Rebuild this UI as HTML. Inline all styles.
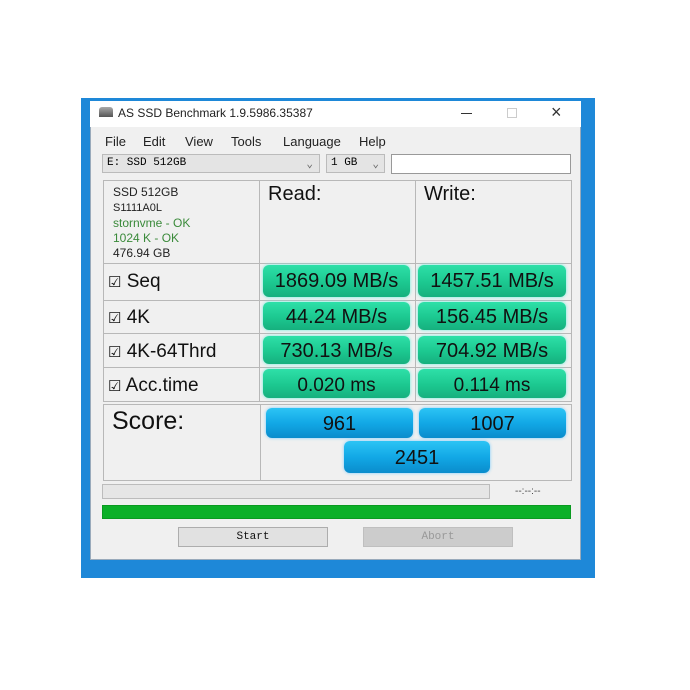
<!DOCTYPE html>
<html><head><style>
*{margin:0;padding:0;box-sizing:border-box}
body{width:690px;height:690px;background:#fff;position:relative;font-family:"Liberation Sans",sans-serif;overflow:hidden}
.a{position:absolute}
.bg{left:81px;top:98px;width:514px;height:480px;background:#1e88d8}
.win{left:90px;top:101px;width:491px;height:459px;background:#f0f0f0;border:1px solid #9ab}
.title{left:90px;top:101px;width:491px;height:26px;background:#fff}
.g{background:linear-gradient(#2ee0a8,#1cc890 55%,#16b07e);border-radius:6px;text-align:center;color:#111;font-size:20px;box-shadow:0 0 3px #6ed}
.b{background:linear-gradient(#2cc4f4,#12a8e6 50%,#0a8ccc);border-radius:6px;text-align:center;color:#111;font-size:20px;box-shadow:0 0 3px #7cf}
.cell{border:1px solid #b8b8b8}
.lbl{font-size:19px;color:#111}
.mono{font-family:"Liberation Mono",monospace;font-size:11px}
.m{position:absolute;top:134px;font-size:13px;color:#222}
</style></head><body>
<div class="a bg"></div>
<div class="a win"></div>
<div class="a title"></div>
<div class="a" style="left:99px;top:107px;width:14px;height:10px;background:linear-gradient(#aaa,#555);border-radius:3px 3px 0 0"></div>
<div class="a" style="left:118px;top:106px;font-size:12px;color:#222">AS SSD Benchmark 1.9.5986.35387</div>
<div class="a" style="left:461px;top:113px;width:11px;height:1px;background:#333"></div>
<div class="a" style="left:507px;top:108px;width:10px;height:10px;border:1px solid #ccc"></div>
<div class="a" style="left:551px;top:102px;font-size:18px;color:#333">×</div>
<div class="m" style="left:105px">File</div>
<div class="m" style="left:143px">Edit</div>
<div class="m" style="left:185px">View</div>
<div class="m" style="left:231px">Tools</div>
<div class="m" style="left:283px">Language</div>
<div class="m" style="left:359px">Help</div>
<div class="a mono" style="left:102px;top:154px;width:218px;height:19px;background:#e4e4e4;border:1px solid #bbb;padding:2px 4px">E: SSD 512GB<span style="position:absolute;right:6px;color:#666">⌄</span></div>
<div class="a mono" style="left:326px;top:154px;width:59px;height:19px;background:#e4e4e4;border:1px solid #bbb;padding:2px 4px">1 GB<span style="position:absolute;right:5px;color:#666">⌄</span></div>
<div class="a" style="left:391px;top:154px;width:180px;height:20px;background:#fff;border:1px solid #999"></div>
<div class="a cell" style="left:103px;top:180px;width:469px;height:222px"></div>
<div class="a" style="left:259px;top:180px;width:1px;height:222px;background:#b8b8b8"></div>
<div class="a" style="left:415px;top:180px;width:1px;height:222px;background:#b8b8b8"></div>
<div class="a" style="left:103px;top:263px;width:469px;height:1px;background:#b8b8b8"></div>
<div class="a" style="left:103px;top:300px;width:469px;height:1px;background:#b8b8b8"></div>
<div class="a" style="left:103px;top:333px;width:469px;height:1px;background:#b8b8b8"></div>
<div class="a" style="left:103px;top:367px;width:469px;height:1px;background:#b8b8b8"></div>
<div class="a" style="left:113px;top:185px;font-size:12px;line-height:15px;color:#222">SSD 512GB<br><span style="font-size:11px">S1111A0L</span><br><span style="color:#3a8a3a">stornvme - OK<br>1024 K - OK</span><br>476.94 GB</div>
<div class="a" style="left:268px;top:183px;font-size:20px;color:#111">Read:</div>
<div class="a" style="left:424px;top:183px;font-size:20px;color:#111">Write:</div>
<div class="a lbl" style="left:108px;top:271px"><span style="font-size:15px">☑</span> Seq</div>
<div class="a lbl" style="left:108px;top:307px"><span style="font-size:15px">☑</span> 4K</div>
<div class="a lbl" style="left:108px;top:341px"><span style="font-size:15px">☑</span> 4K-64Thrd</div>
<div class="a lbl" style="left:108px;top:375px"><span style="font-size:15px">☑</span> Acc.time</div>
<div class="a g" style="left:263px;top:265px;width:147px;height:32px;line-height:33px">1869.09 MB/s</div>
<div class="a g" style="left:418px;top:265px;width:148px;height:32px;line-height:33px">1457.51 MB/s</div>
<div class="a g" style="left:263px;top:302px;width:147px;height:28px;line-height:31px">44.24 MB/s</div>
<div class="a g" style="left:418px;top:302px;width:148px;height:28px;line-height:31px">156.45 MB/s</div>
<div class="a g" style="left:263px;top:336px;width:147px;height:28px;line-height:31px">730.13 MB/s</div>
<div class="a g" style="left:418px;top:336px;width:148px;height:28px;line-height:31px">704.92 MB/s</div>
<div class="a g" style="left:263px;top:369px;width:147px;height:29px;line-height:33px;font-size:19px">0.020 ms</div>
<div class="a g" style="left:418px;top:369px;width:148px;height:29px;line-height:33px;font-size:19px">0.114 ms</div>
<div class="a cell" style="left:103px;top:404px;width:469px;height:77px"></div>
<div class="a" style="left:260px;top:404px;width:1px;height:77px;background:#b8b8b8"></div>
<div class="a" style="left:112px;top:407px;font-size:25px;color:#111">Score:</div>
<div class="a b" style="left:266px;top:408px;width:147px;height:30px;line-height:33px">961</div>
<div class="a b" style="left:419px;top:408px;width:147px;height:30px;line-height:33px">1007</div>
<div class="a b" style="left:344px;top:441px;width:146px;height:32px;line-height:34px">2451</div>
<div class="a" style="left:102px;top:484px;width:388px;height:15px;background:#e6e6e6;border:1px solid #bcbcbc"></div>
<div class="a" style="left:515px;top:486px;font-size:10px;color:#444">--:--:--</div>
<div class="a" style="left:102px;top:505px;width:469px;height:14px;background:#0cb028;border:1px solid #0a9a20"></div>
<div class="a mono" style="left:178px;top:527px;width:150px;height:20px;background:#e1e1e1;border:1px solid #adadad;text-align:center;line-height:18px;color:#111">Start</div>
<div class="a mono" style="left:363px;top:527px;width:150px;height:20px;background:#cccccc;border:1px solid #bfbfbf;text-align:center;line-height:18px;color:#999">Abort</div>
</body></html>
